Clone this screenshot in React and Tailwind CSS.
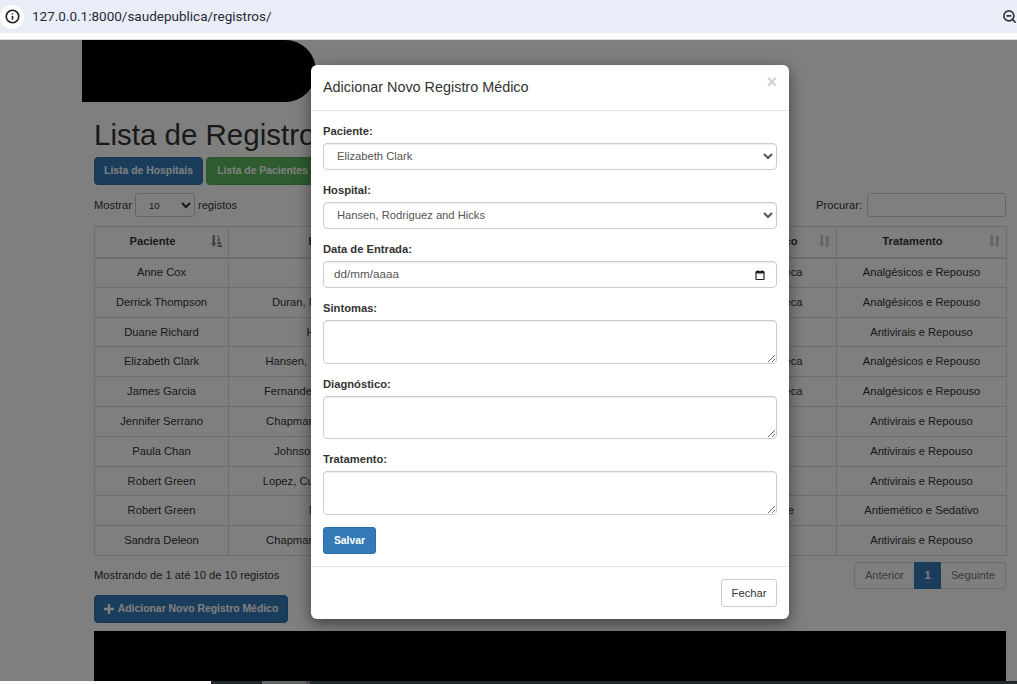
import React from 'react';
import { Info, ZoomOut } from 'lucide-react';

const rows = [
  ['Anne Cox', 'Smith Inc', 'Enxaqueca', 'Analgésicos e Repouso'],
  ['Derrick Thompson', 'Duran, Moore and Sanders', 'Enxaqueca', 'Analgésicos e Repouso'],
  ['Duane Richard', 'Hill and Sons', 'Gripe', 'Antivirais e Repouso'],
  ['Elizabeth Clark', 'Hansen, Rodriguez and Hicks', 'Enxaqueca', 'Analgésicos e Repouso'],
  ['James Garcia', 'Fernandez, Hall and Woodson', 'Enxaqueca', 'Analgésicos e Repouso'],
  ['Jennifer Serrano', 'Chapman, Ross and Sanders', 'Gripe', 'Antivirais e Repouso'],
  ['Paula Chan', 'Johnson, Hill and Sanders', 'Gripe', 'Antivirais e Repouso'],
  ['Robert Green', 'Lopez, Cunningham and Lewis', 'Gripe', 'Antivirais e Repouso'],
  ['Robert Green', 'Miller Group', 'Gastrite', 'Antiemético e Sedativo'],
  ['Sandra Deleon', 'Chapman, Ross and Sanders', 'Gripe', 'Antivirais e Repouso'],
];

const SortIcon = ({ active }) => (
  <svg viewBox="0 0 11 12" className={`absolute top-[8px] right-[6px] h-3 w-[11px] ${active ? 'text-[#888]' : 'text-[#c8c8c8]'}`} fill="currentColor">
    <path d="M1.500 0h2.500v8h1.500L2.750 12 0 8h1.500z" />
    {active ? (
      <path d="M6.500 0.500h1.500v2H6.500zM6.500 3.500h2.500v2.200H6.500zM6.500 6.700h3.500v2.200H6.500zM6.500 9.800H11V12H6.500z" />
    ) : (
      <path d="M7 12h2.500V4H11L8.250 0 5.500 4H7z" />
    )}
  </svg>
);

const HeadCell = ({ children, width, active }) => (
  <th className={`relative h-[31px] border border-b-2 border-[#ddd] pr-[18px] text-center text-[11.2px] font-bold ${width}`}>
    {children}
    <SortIcon active={active} />
  </th>
);

const Field = ({ label, children, className = 'mb-[10px]' }) => (
  <div className={className}>
    <label className="mb-[3px] block h-[19px] pt-[2px] text-[11.2px] leading-[17px] font-bold text-[#333]">{label}</label>
    {children}
  </div>
);

const controlClass = 'block w-full rounded-[4px] border border-[#ccc] bg-white text-[11.2px] text-[#555] shadow-[inset_0_1px_1px_rgba(0,0,0,0.075)]';

const App = () => {
  return (
    <div className="relative h-[684px] w-[1017px] overflow-hidden bg-white font-['Liberation_Sans',Arial,sans-serif] text-[11.2px] text-[#333]">
      {/* barra do navegador */}
      <div className="flex h-[33px] items-center bg-[#e9edf7] pr-[1px]">
        <div className="flex h-[24px] w-[24px] items-center justify-center rounded-full bg-white">
          <Info className="h-[15px] w-[15px] text-[#1f1f1f]" strokeWidth={2.6} />
        </div>
        <span className="ml-[8px] font-['Roboto',sans-serif] text-[13.5px] text-[#2a2a3a]">127.0.0.1:8000/saudepublica/registros/</span>
        <ZoomOut className="mr-[-1px] ml-auto h-[15px] w-[15px] text-[#333]" strokeWidth={2.6} />
      </div>
      <div className="h-[6px] bg-white" />
      <div className="h-px bg-[#d8d8d8]" />

      <div className="relative h-[644px] overflow-hidden">
        <div className="pl-[82px]">
          <div className="h-[62px] w-[234px] rounded-r-[40px] bg-black" />
          <div className="w-[924px] pl-[12px]">
            <h2 className="mt-[16px] h-[33px] text-[29.5px] leading-[33px] font-normal">Lista de Registros Médicos</h2>
            <div className="mt-[6px] flex gap-[3px] text-[10.4px] font-bold text-white">
              <button className="h-[28px] w-[109px] rounded-[4px] border border-[#2e6da4] bg-[#337ab7]">Lista de Hospitais</button>
              <button className="h-[28px] w-[113px] rounded-[4px] border border-[#4cae4c] bg-[#5cb85c]">Lista de Pacientes</button>
            </div>
            <div className="mt-[8px] flex h-[24px] items-center justify-between">
              <div className="flex items-center">
                <span>Mostrar</span>
                <select className="mr-[3px] ml-[3px] h-[24px] w-[60px] rounded-[3px] border border-[#ccc] bg-white pl-[9px] text-[9.6px]">
                  <option>10</option>
                </select>
                <span>registos</span>
              </div>
              <div className="flex items-center gap-[5px]">
                <span>Procurar:</span>
                <input className="h-[24px] w-[139px] rounded-[3px] border border-[#ccc] bg-white" />
              </div>
            </div>

            <table className="mt-[9px] w-[912px] table-fixed border-collapse">
              <thead>
                <tr>
                  <HeadCell width="w-[134px]" active>Paciente</HeadCell>
                  <HeadCell width="w-[222px]">Hospital</HeadCell>
                  <HeadCell width="w-[131px]">Data de Entrada</HeadCell>
                  <HeadCell width="w-[131px]">Sintomas</HeadCell>
                  <HeadCell width="w-[124px]">Diagnóstico</HeadCell>
                  <HeadCell width="w-[170px]">Tratamento</HeadCell>
                </tr>
              </thead>
              <tbody>
                {rows.map((row, i) => (
                  <tr key={i} className="h-[29.8px] text-center">
                    <td className="border border-[#ddd]">{row[0]}</td>
                    <td className="border border-[#ddd]">{row[1]}</td>
                    <td className="border border-[#ddd]" />
                    <td className="border border-[#ddd]" />
                    <td className="border border-[#ddd]">{row[2]}</td>
                    <td className="border border-[#ddd]">{row[3]}</td>
                  </tr>
                ))}
              </tbody>
            </table>

            <div className="mt-[6px] flex h-[27px] items-center justify-between">
              <span>Mostrando de 1 até 10 de 10 registos</span>
              <div className="flex h-[27px] items-stretch text-[#777]">
                <span className="flex w-[60px] items-center justify-center rounded-l-[4px] border border-r-0 border-[#ddd]">Anterior</span>
                <span className="flex w-[27px] items-center justify-center bg-[#337ab7] font-bold text-white">1</span>
                <span className="flex w-[65px] items-center justify-center rounded-r-[4px] border border-l-0 border-[#ddd]">Seguinte</span>
              </div>
            </div>
            <button className="mt-[6px] flex h-[28px] w-[194px] items-center justify-center gap-[4px] rounded-[4px] border border-[#2e6da4] bg-[#337ab7] text-[10.4px] font-bold text-white">
              <svg viewBox="0 0 10 10" className="h-[10px] w-[10px]" fill="currentColor">
                <path d="M3.800 0h2.400v3.800H10v2.400H6.200V10H3.800V6.200H0V3.800h3.800z" />
              </svg>
              Adicionar Novo Registro Médico
            </button>
            <div className="mt-[8px] h-[60px] bg-black" />
          </div>
        </div>

        {/* faixa inferior */}
        <div className="absolute right-0 bottom-0 left-0 flex h-[3px] bg-[#20292c]">
          <div className="w-[211px] bg-white" />
          <div className="w-[51px]" />
          <div className="w-[44px] bg-[#5f6364]" />
          <div className="w-[4px] bg-[#4a5052]" />
        </div>

        {/* fundo do modal */}
        <div className="absolute inset-x-0 top-0 bottom-[3px] bg-black/50" />

        {/* modal */}
        <div className="absolute top-[25px] left-[311px] w-[478px] rounded-[6px] bg-white shadow-[0_5px_15px_rgba(0,0,0,0.5)]">
          <div className="relative flex h-[46px] items-center border-b border-[#e5e5e5] pl-[12px]">
            <h4 className="text-[14.4px] font-normal text-[#333]">Adicionar Novo Registro Médico</h4>
            <span className="absolute top-[6px] right-[12px] text-lg leading-[22px] font-bold text-[#cfcfcf]">×</span>
          </div>
          <div className="px-[12px] pt-[10px]">
            <Field label="Paciente:">
              <select className={`${controlClass} h-[27px] pb-[2px] pl-[9px]`}>
                <option>Elizabeth Clark</option>
              </select>
            </Field>
            <Field label="Hospital:">
              <select className={`${controlClass} h-[27px] pb-[2px] pl-[9px]`}>
                <option>Hansen, Rodriguez and Hicks</option>
              </select>
            </Field>
            <Field label="Data de Entrada:">
              <div className={`${controlClass} flex h-[27px] items-center justify-between pr-[10px] pl-[10px]`}>
                <span className="mb-[1px] text-[11.7px]">dd/mm/aaaa</span>
                <svg viewBox="0 0 12 12" className="h-[12px] w-[12px] text-[#222]" fill="none" stroke="currentColor">
                  <rect x="2" y="2.500" width="8" height="8" rx="0.500" strokeWidth="1.200" />
                  <path d="M2 3.500h8" strokeWidth="2" />
                  <path d="M4 1v1.500M8 1v1.500" strokeWidth="1" />
                </svg>
              </div>
            </Field>
            <Field label="Sintomas:">
              <textarea className={`${controlClass} h-[44px]`} />
            </Field>
            <Field label="Diagnóstico:">
              <textarea className={`${controlClass} h-[43px]`} />
            </Field>
            <Field label="Tratamento:" className="mb-[12px]">
              <textarea className={`${controlClass} h-[44px]`} />
            </Field>
            <button className="h-[27px] w-[53px] rounded-[3px] border border-[#2e6da4] bg-[#337ab7] text-[10.4px] font-bold text-white">Salvar</button>
          </div>
          <div className="mt-[12px] flex h-[53px] items-start justify-end border-t border-[#e5e5e5] pt-[12px] pr-[12px]">
            <button className="h-[28px] w-[56px] rounded-[3px] border border-[#ccc] bg-white text-[#333]">Fechar</button>
          </div>
        </div>
      </div>
    </div>
  );
};

export default App;
